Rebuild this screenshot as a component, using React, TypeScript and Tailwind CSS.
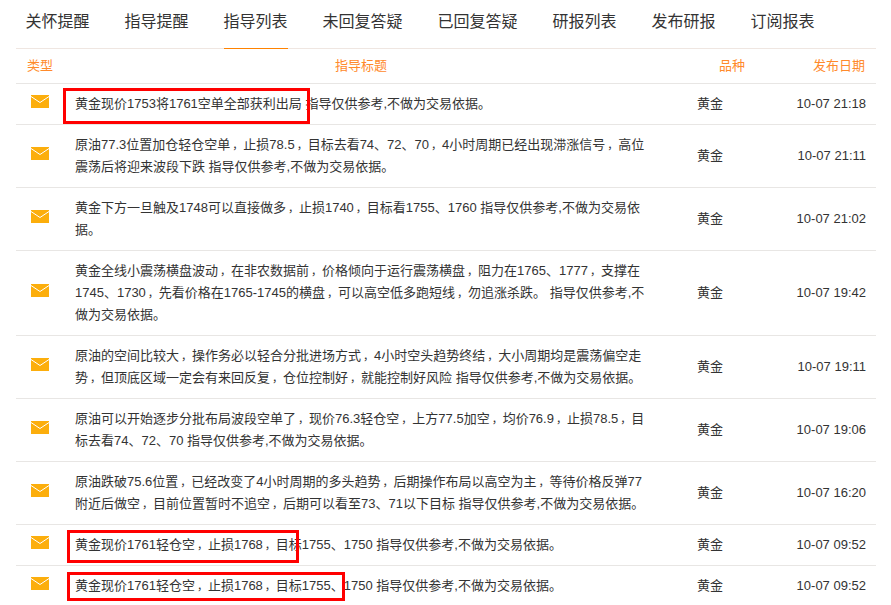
const tabs = ['关怀提醒', '指导提醒', '指导列表', '未回复答疑', '已回复答疑', '研报列表', '发布研报', '订阅报表']

const suffix = ' 指导仅供参考,不做为交易依据。'

const rows = [
  { lines: ['黄金现价1753将1761空单全部获利出局' + suffix], date: '10-07 21:18', mark: 'top-[4px] left-[47px] h-[36px] w-[247px]' },
  { lines: ['原油77.3位置加仓轻仓空单，止损78.5，目标去看74、72、70，4小时周期已经出现滞涨信号，高位', '震荡后将迎来波段下跌' + suffix], date: '10-07 21:11' },
  { lines: ['黄金下方一旦触及1748可以直接做多，止损1740，目标看1755、1760 指导仅供参考,不做为交易依', '据。'], date: '10-07 21:02' },
  { lines: ['黄金全线小震荡横盘波动，在非农数据前，价格倾向于运行震荡横盘，阻力在1765、1777，支撑在', '1745、1730，先看价格在1765-1745的横盘，可以高空低多跑短线，勿追涨杀跌。 指导仅供参考,不', '做为交易依据。'], date: '10-07 19:42' },
  { lines: ['原油的空间比较大，操作务必以轻合分批进场方式，4小时空头趋势终结，大小周期均是震荡偏空走', '势，但顶底区域一定会有来回反复，仓位控制好，就能控制好风险' + suffix], date: '10-07 19:11' },
  { lines: ['原油可以开始逐步分批布局波段空单了，现价76.3轻仓空，上方77.5加空，均价76.9，止损78.5，目', '标去看74、72、70' + suffix], date: '10-07 19:06' },
  { lines: ['原油跌破75.6位置，已经改变了4小时周期的多头趋势，后期操作布局以高空为主，等待价格反弹77', '附近后做空，目前位置暂时不追空，后期可以看至73、71以下目标' + suffix], date: '10-07 16:20' },
  { lines: ['黄金现价1761轻仓空，止损1768，目标1755、1750' + suffix], date: '10-07 09:52', mark: 'top-[5px] left-[51px] h-[33px] w-[232px]' },
  { lines: ['黄金现价1761轻仓空，止损1768，目标1755、1750' + suffix], date: '10-07 09:52', mark: 'top-[6px] left-[51px] h-[29px] w-[278px]' },
]

function Mail() {
  return (
    <svg width="18" height="13" viewBox="0 0 18 13" className="-mt-[5px] ml-[15px] block">
      <rect width="18" height="13" fill="#fcae0c" />
      <path d="M0 1.5 L9 7.5 L18 1.5" fill="none" stroke="#ffffff" strokeWidth="1" />
    </svg>
  )
}

// full-width commas sit mid-cell in the reference, so push them in a little
function Line({ text }: { text: string }) {
  const parts = text.split('，')
  return (
    <div className="h-[22px]">
      {parts.map((part, i) => (
        <span key={i}>
          {i > 0 && <span className="inline-block w-[13px] pl-[2px] text-[11px]">，</span>}
          {part}
        </span>
      ))}
    </div>
  )
}

export default function App() {
  return (
    <div className="h-[605px] w-[891px] overflow-hidden bg-white px-4 font-['Liberation_Sans','Noto_Sans_CJK_SC',sans-serif] text-[13px] leading-[22px] text-[#333]">
      <nav className="flex h-[49px] w-[860px] gap-[35px] border-b border-[#efe6e1] pl-[9.5px] text-base">
        {tabs.map((tab, i) => (
          <a key={tab} className={`h-[49px] pt-[10px] ${i === 2 ? 'border-b border-[#ff8200]' : ''}`}>
            {tab}
          </a>
        ))}
      </nav>
      <div className="flex h-[35px] w-[860px] items-center border-b border-[#e8e6e4] text-[#ff8a2b]">
        <span className="ml-[11px] w-[59px]">类型</span>
        <span className="w-[550px] text-center">指导标题</span>
        <span className="ml-[83px] w-[60px]">品种</span>
        <span className="ml-auto mr-[11px]">发布日期</span>
      </div>
      {rows.map((row, i) => (
        <div key={i} className="relative flex w-[860px] items-center border-b border-[#e8e6e4] py-[9px]">
          <div className="w-[59px]">
            <Mail />
          </div>
          <div className="w-[622px] whitespace-pre">
            {row.lines.map((line) => (
              <Line key={line} text={line} />
            ))}
          </div>
          <span className="w-[60px]">黄金</span>
          <span className="ml-auto mr-[10px]">{row.date}</span>
          {row.mark && <div className={`absolute border-[3px] border-[#ff0000] ${row.mark}`} />}
        </div>
      ))}
    </div>
  )
}
